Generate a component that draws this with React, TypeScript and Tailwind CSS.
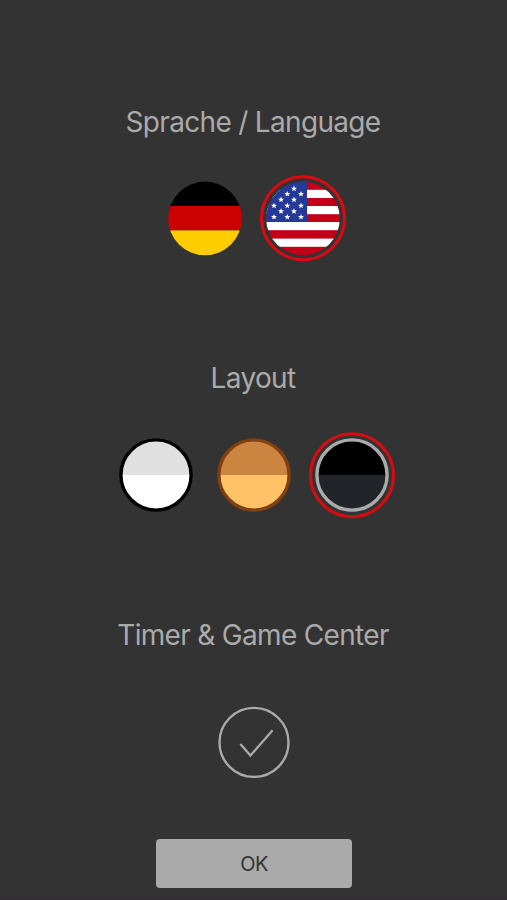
import type { ReactNode } from 'react';

const STARS = [
  [35, 14.7],
  [28.3, 20],
  [42, 20],
  [22, 25.7],
  [35, 25.7],
  [15, 31.7],
  [28.3, 31.7],
  [42, 31.7],
  [22, 37.3],
  [35, 37.3],
  [15, 43],
  [28.3, 43],
  [42, 43],
];

const WHITE_STRIPES = [15.8, 32, 48, 64.6];

function Option({ label, selected, children }: { label: string; selected?: boolean; children: ReactNode }) {
  return (
    <button aria-label={label} aria-pressed={!!selected} className="size-[88px]">
      <svg viewBox="0 0 88 88" className="size-full">
        {children}
        {selected && <circle cx="44" cy="44.2" r="41.5" fill="none" stroke="#dc0a10" strokeWidth="3" />}
      </svg>
    </button>
  );
}

function GermanFlag() {
  return (
    <g clipPath="url(#flag)">
      <rect width="88" height="32" fill="#000" />
      <rect y="32" width="88" height="24.4" fill="#cc0000" />
      <rect y="56.4" width="88" height="32" fill="#ffcc00" />
    </g>
  );
}

function UsFlag() {
  return (
    <g clipPath="url(#flag)">
      <rect width="88" height="88" fill="#c10018" />
      {WHITE_STRIPES.map((y) => (
        <rect key={y} y={y} width="88" height="8.2" fill="#fff" />
      ))}
      <rect width="48" height="48" fill="#253a98" />
      {STARS.map(([x, y]) => (
        <path
          key={`${x}-${y}`}
          transform={`translate(${x} ${y}) scale(3.1)`}
          d="M0-1 .26-.33.95-.31.42.14.59.81 0 .44-.59.81-.42.14-.95-.31-.26-.33Z"
          fill="#fff"
        />
      ))}
    </g>
  );
}

function Swatch({ top, bottom, border }: { top: string; bottom: string; border: string }) {
  return (
    <>
      <path d="M9 44a35 35 0 0 1 70 0Z" fill={top} />
      <path d="M9 44a35 35 0 0 0 70 0Z" fill={bottom} />
      <circle cx="44" cy="44" r="35.1" fill="none" stroke={border} strokeWidth="3.4" />
    </>
  );
}

function Heading({ children }: { children: ReactNode }) {
  return (
    <h2 className="mr-[2px] h-10 text-[28px] leading-10 tracking-[-0.68px] whitespace-nowrap text-[#aaaaaa]">
      {children}
    </h2>
  );
}

export default function App() {
  return (
    <main className="flex h-[900px] w-full flex-col items-center border-b border-[#352b30] bg-[#333333] pt-[102px] pl-px font-['Inter',sans-serif]">
      <svg className="absolute size-0">
        <clipPath id="flag">
          <circle cx="44" cy="44.4" r="36.8" />
        </clipPath>
      </svg>

      <Heading>Sprache / Language</Heading>
      <div className="mt-8 flex gap-2.5">
        <Option label="Deutsch">
          <GermanFlag />
        </Option>
        <Option label="English" selected>
          <UsFlag />
        </Option>
      </div>

      <div className="mt-24">
        <Heading>Layout</Heading>
      </div>
      <div className="mt-[33px] flex gap-2.5">
        <Option label="Light">
          <Swatch top="#e0e0e0" bottom="#ffffff" border="#000000" />
        </Option>
        <Option label="Wood">
          <Swatch top="#cc8540" bottom="#ffc266" border="#80400f" />
        </Option>
        <Option label="Dark" selected>
          <Swatch top="#000000" bottom="#212529" border="#aaaaaa" />
        </Option>
      </div>

      <div className="mt-24">
        <Heading>Timer &amp; Game Center</Heading>
      </div>
      <button aria-label="Timer" className="mt-[43px] size-[88px]">
        <svg viewBox="0 0 88 88" fill="none" stroke="#aaaaaa" className="size-full">
          <circle cx="44" cy="44.4" r="34.5" strokeWidth="2.4" />
          <path d="M30.4 46 40.4 57.6 62.6 32.2" strokeWidth="2.3" />
        </svg>
      </button>

      <button className="mt-[53px] h-[49px] w-[196px] rounded-[4px] bg-[#aaaaaa] text-[20px] tracking-[-0.6px] text-[#333333]">
        OK
      </button>
    </main>
  );
}
